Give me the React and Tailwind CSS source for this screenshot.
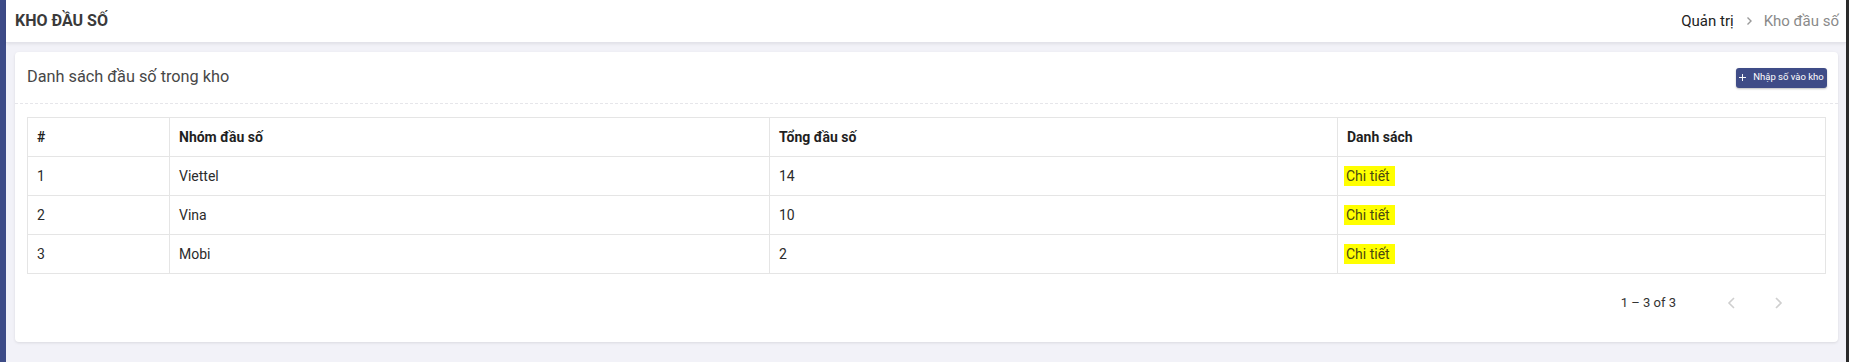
import React from "react";

const rows = [
  { id: 1, name: "Viettel", total: 14 },
  { id: 2, name: "Vina", total: 10 },
  { id: 3, name: "Mobi", total: 2 },
];

export default function App() {
  return (
    <div
      className="flex h-[362px] w-full overflow-hidden"
      style={{ fontFamily: "Roboto, 'Noto Sans', sans-serif" }}
    >
      <div className="w-[6px] shrink-0 bg-[#3d4b87]" />
      <div className="flex min-w-0 flex-1 flex-col bg-[#f2f2f8]">
        <header className="flex h-[43px] shrink-0 items-center justify-between border-b border-[#e3e3ea] bg-white pl-[9px] pr-[7px] shadow-[0_1px_3px_rgba(0,0,0,0.08)]">
          <h1 className="text-[16px] font-bold text-[#3a3a3a]">KHO ĐẦU SỐ</h1>
          <nav className="flex items-center text-[15px]">
            <span className="text-[#222]">Quản trị</span>
            <svg className="mx-[10px] h-[10px] w-[10px] text-[#999]" viewBox="0 0 10 10" fill="none" stroke="currentColor" strokeWidth="1.4">
              <path d="M3.5 1.5 7 5 3.5 8.5" />
            </svg>
            <span className="text-[#8a8a8a]">Kho đầu số</span>
          </nav>
        </header>
        <div className="px-[9px] pr-[8px] pt-[9px]">
          <div className="flex h-[290px] flex-col rounded-[4px] bg-white shadow-[0_1px_3px_rgba(0,0,0,0.1)]">
            <div className="flex h-[52px] shrink-0 items-center justify-between border-b border-dashed border-[#e6e6ea] pl-[12px] pr-[11px]">
              <h2 className="text-[16.3px] text-[#474747]">Danh sách đầu số trong kho</h2>
              <button className="flex h-[20px] w-[91px] items-center justify-center gap-[7px] rounded-[3px] bg-[#3f4c87] text-[9.5px] font-normal text-white shadow-[0_1px_2px_rgba(0,0,0,0.25)]">
                <svg className="h-[7px] w-[7px]" viewBox="0 0 8 8" fill="none" stroke="currentColor" strokeWidth="1.1">
                  <path d="M4 0v8M0 4h8" />
                </svg>
                <span>Nhập số vào kho</span>
              </button>
            </div>
            <div className="px-[12px] pt-[13px]">
              <table className="w-full table-fixed border-collapse text-[14px] text-[#2b2b2b]">
                <colgroup>
                  <col className="w-[142px]" />
                  <col className="w-[600px]" />
                  <col className="w-[568px]" />
                  <col />
                </colgroup>
                <thead>
                  <tr className="h-[39px]">
                    <th className="border border-[#e5e5e5] px-[9px] text-left font-bold text-[#1f1f1f]">#</th>
                    <th className="border border-[#e5e5e5] px-[9px] text-left font-bold text-[#1f1f1f]">Nhóm đầu số</th>
                    <th className="border border-[#e5e5e5] px-[9px] text-left font-bold text-[#1f1f1f]">Tổng đầu số</th>
                    <th className="border border-[#e5e5e5] px-[9px] text-left font-bold text-[#1f1f1f]">Danh sách</th>
                  </tr>
                </thead>
                <tbody>
                  {rows.map((r) => (
                    <tr key={r.id} className="h-[39px]">
                      <td className="border border-[#e5e5e5] px-[9px]">{r.id}</td>
                      <td className="border border-[#e5e5e5] px-[9px]">{r.name}</td>
                      <td className="border border-[#e5e5e5] px-[9px]">{r.total}</td>
                      <td className="border border-[#e5e5e5] px-[9px]">
                        <span className="-ml-[3px] bg-[#ffff00] py-[2px] pl-[2px] pr-[5px] text-[#4a4a10]">Chi tiết</span>
                      </td>
                    </tr>
                  ))}
                </tbody>
              </table>
            </div>
            <div className="flex h-[58px] items-center justify-end pr-[40px]">
              <span className="text-[13px] text-[#333]">1 – 3 of 3</span>
              <div className="ml-[36px] flex items-center gap-[6px]">
                <span className="flex h-[40px] w-[40px] items-center justify-center text-[#cfcfcf]">
                  <svg className="h-[14px] w-[14px]" viewBox="0 0 14 14" fill="none" stroke="currentColor" strokeWidth="1.6">
                    <path d="M9 2 4 7l5 5" />
                  </svg>
                </span>
                <span className="flex h-[40px] w-[40px] items-center justify-center text-[#cfcfcf]">
                  <svg className="h-[14px] w-[14px]" viewBox="0 0 14 14" fill="none" stroke="currentColor" strokeWidth="1.6">
                    <path d="M5 2l5 5-5 5" />
                  </svg>
                </span>
              </div>
            </div>
          </div>
        </div>
      </div>
      <div className="w-[3px] shrink-0 bg-[#2a2a2a]" />
    </div>
  );
}
